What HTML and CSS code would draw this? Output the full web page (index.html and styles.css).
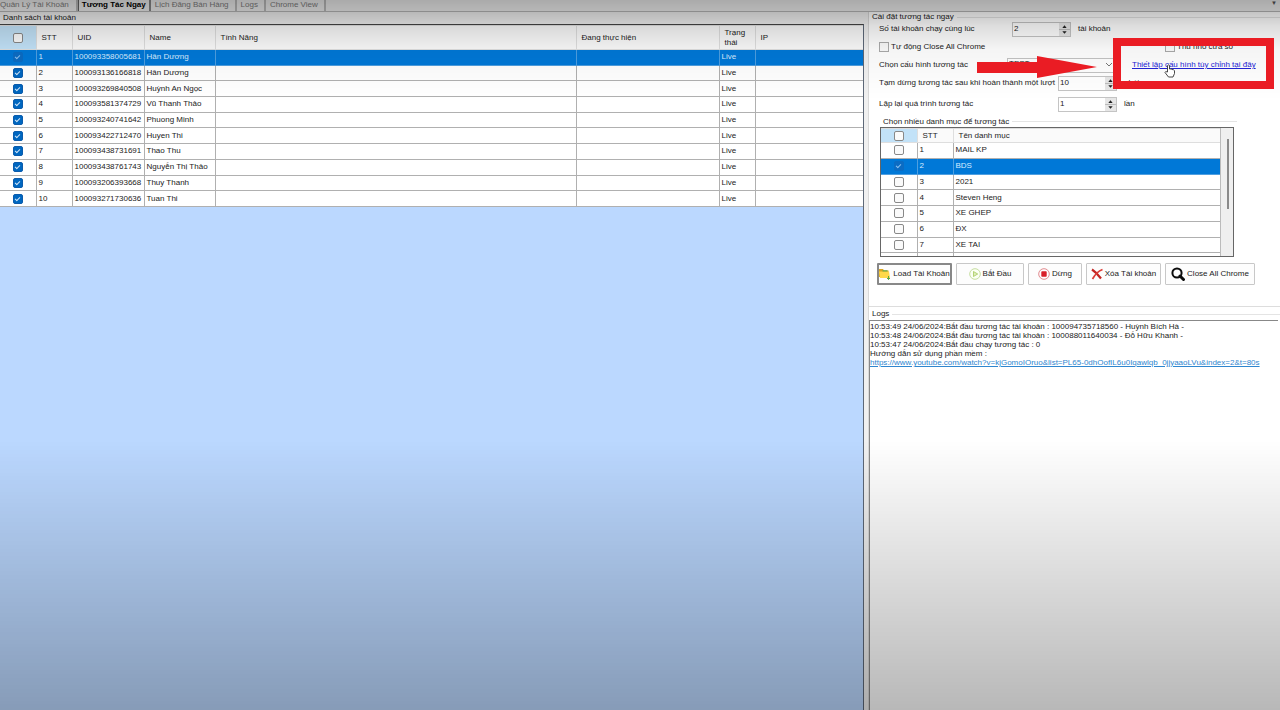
FILE: index.html
```html
<!DOCTYPE html>
<html lang="vi">
<head>
<meta charset="utf-8">
<title>Tương Tác Ngay</title>
<link rel="stylesheet" href="styles.css">
</head>
<body>
<nav class="tabs">
  <button class="tab">Quản Lý Tài Khoản</button>
  <button class="tab active">Tương Tác Ngay</button>
  <button class="tab">Lịch Đăng Bán Hàng</button>
  <button class="tab">Logs</button>
  <button class="tab">Chrome View</button>
  <span class="tabs-menu">▼</span>
</nav>
<main class="work">
  <section class="accounts">
    <h2 class="caption">Danh sách tài khoản</h2>
    <div class="grid-area">
      <table class="grid accounts-grid">
        <colgroup><col class="c36"><col class="c36"><col class="c72"><col class="c71"><col><col class="c143"><col class="c36"><col class="c108"></colgroup>
        <thead><tr><th class="pick"><input type="checkbox" aria-label="Chọn tất cả"></th><th>STT</th><th>UID</th><th>Name</th><th>Tính Năng</th><th>Đang thực hiện</th><th>Trạng thái</th><th>IP</th></tr></thead>
        <tbody>
          <tr class="selected"><td><input type="checkbox" checked aria-label="1"></td><td>1</td><td>100093358005681</td><td>Hân Dương</td><td></td><td></td><td>Live</td><td></td></tr>
          <tr><td><input type="checkbox" checked aria-label="2"></td><td>2</td><td>100093136166818</td><td>Hân Dương</td><td></td><td></td><td>Live</td><td></td></tr>
          <tr><td><input type="checkbox" checked aria-label="3"></td><td>3</td><td>100093269840508</td><td>Huỳnh An Ngọc</td><td></td><td></td><td>Live</td><td></td></tr>
          <tr><td><input type="checkbox" checked aria-label="4"></td><td>4</td><td>100093581374729</td><td>Vũ Thanh Thảo</td><td></td><td></td><td>Live</td><td></td></tr>
          <tr><td><input type="checkbox" checked aria-label="5"></td><td>5</td><td>100093240741642</td><td>Phuong Minh</td><td></td><td></td><td>Live</td><td></td></tr>
          <tr><td><input type="checkbox" checked aria-label="6"></td><td>6</td><td>100093422712470</td><td>Huyen Thi</td><td></td><td></td><td>Live</td><td></td></tr>
          <tr><td><input type="checkbox" checked aria-label="7"></td><td>7</td><td>100093438731691</td><td>Thao Thu</td><td></td><td></td><td>Live</td><td></td></tr>
          <tr><td><input type="checkbox" checked aria-label="8"></td><td>8</td><td>100093438761743</td><td>Nguyễn Thị Thảo</td><td></td><td></td><td>Live</td><td></td></tr>
          <tr><td><input type="checkbox" checked aria-label="9"></td><td>9</td><td>100093206393668</td><td>Thuy Thanh</td><td></td><td></td><td>Live</td><td></td></tr>
          <tr><td><input type="checkbox" checked aria-label="10"></td><td>10</td><td>100093271730636</td><td>Tuan Thi</td><td></td><td></td><td>Live</td><td></td></tr>
        </tbody>
      </table>
    </div>
  </section>

  <section class="side">
    <div class="settings">
      <h2 class="legend">Cài đặt tương tác ngay</h2>
      <div class="form">
        <div class="row">
          <label class="name wide" for="threads">Số tài khoản chạy cùng lúc</label>
          <span class="spin"><input id="threads" type="number" value="2"><svg viewBox="0 0 10 12"><path d="M0 6h10" stroke="#bbb"/><path d="M3 4.500h4L5 2zM3 7.500h4L5 10z"/></svg></span>
          <span class="unit">tài khoản</span>
        </div>
        <div class="row">
          <label class="check"><input type="checkbox">Tự động Close All Chrome</label>
          <label class="check compact"><input type="checkbox">Thu nhỏ cửa sổ</label>
        </div>
        <div class="row">
          <label class="name config" for="config">Chọn cấu hình tương tác</label>
          <span class="combo"><select id="config"><option>TEST</option></select><svg viewBox="0 0 8 6"><path d="M1 1l3 3 3-3" fill="none" stroke="#777"/></svg></span>
          <a class="setup" href="#config">Thiết lập cấu hình tùy chỉnh tại đây</a>
        </div>
        <div class="row">
          <label class="name long" for="pause">Tạm dừng tương tác sau khi hoàn thành một lượt</label>
          <span class="spin"><input id="pause" type="number" value="10"><svg viewBox="0 0 10 12"><path d="M0 6h10" stroke="#bbb"/><path d="M3 4.500h4L5 2zM3 7.500h4L5 10z"/></svg></span>
          <span class="unit">phút</span>
        </div>
        <div class="row tall">
          <label class="name long" for="repeat">Lặp lại quá trình tương tác</label>
          <span class="spin"><input id="repeat" type="number" value="1"><svg viewBox="0 0 10 12"><path d="M0 6h10" stroke="#bbb"/><path d="M3 4.500h4L5 2zM3 7.500h4L5 10z"/></svg></span>
          <span class="unit">lần</span>
        </div>
      </div>
      <div class="category">
        <h3 class="legend">Chọn nhiều danh mục để tương tác</h3>
        <div class="category-box">
          <table class="grid category-grid">
            <colgroup><col class="c36"><col class="c36"><col></colgroup>
            <thead><tr><th class="pick"><input type="checkbox" aria-label="Chọn tất cả danh mục"></th><th>STT</th><th>Tên danh mục</th></tr></thead>
            <tbody>
              <tr><td><input type="checkbox" aria-label="MAIL KP"></td><td>1</td><td>MAIL KP</td></tr>
              <tr class="selected"><td><input type="checkbox" checked aria-label="BDS"></td><td>2</td><td>BDS</td></tr>
              <tr><td><input type="checkbox" aria-label="2021"></td><td>3</td><td>2021</td></tr>
              <tr><td><input type="checkbox" aria-label="Steven Heng"></td><td>4</td><td>Steven Heng</td></tr>
              <tr><td><input type="checkbox" aria-label="XE GHEP"></td><td>5</td><td>XE GHEP</td></tr>
              <tr><td><input type="checkbox" aria-label="ĐX"></td><td>6</td><td>ĐX</td></tr>
              <tr><td><input type="checkbox" aria-label="XE TAI"></td><td>7</td><td>XE TAI</td></tr>
              <tr><td><input type="checkbox" aria-label="8"></td><td></td><td></td></tr>
            </tbody>
          </table>
          <div class="scroll"><div class="thumb"></div></div>
        </div>
      </div>
      <div class="actions">
        <button class="action focus"><svg viewBox="0 0 12 12"><path d="M0 1h4l1 1.500h4.500V9H0z" fill="#d9a520"/><path d="M0 3.500h10l1 6.500H1z" fill="#ffd84a"/><path d="M3.500 2.200h5v1.300h-5z" fill="#6fae4c"/><path d="M9.500 8v3.500M8 10l1.500 1.500L11 10" fill="none" stroke="#5da646"/></svg>Load Tài Khoản</button>
        <button class="action start"><svg viewBox="0 0 12 12"><circle cx="6" cy="6" r="5.300" fill="#fbfff4" stroke="#c6dea0"/><path d="M4.500 3.500v5L8.700 6z" fill="#dcedb8" stroke="#9cc34c" stroke-width=".7"/></svg>Bắt Đầu</button>
        <button class="action stop"><svg viewBox="0 0 12 12"><circle cx="6" cy="6" r="5.300" fill="#fff" stroke="#e08a8e"/><rect x="3.300" y="3.300" width="5.400" height="5.400" rx=".8" fill="#d8202a"/></svg>Dừng</button>
        <button class="action remove"><svg viewBox="0 0 12 12"><path d="M1 1.500c3 2 6 5 9 9" fill="none" stroke="#c32522" stroke-width="2.200"/><path d="M11.500 1.500C7.500 3 4 6.500 1.500 11" fill="none" stroke="#dc3b35" stroke-width="1.700"/></svg>Xóa Tài khoản</button>
        <button class="action close-all"><svg class="lens" viewBox="0 0 14 14"><circle cx="6" cy="6" r="4.600" fill="#fff" stroke="#0c0c0c" stroke-width="2"/><path d="M9 9l3.500 3.500" stroke="#0c0c0c" stroke-width="3" stroke-linecap="round"/></svg>Close All Chrome</button>
      </div>
    </div>
    <div class="logs">
      <h2 class="legend">Logs</h2>
      <div class="log-box">
        <p>10:53:49 24/06/2024:Bắt đầu tương tác tài khoản : 100094735718560 - Huỳnh Bích Hà -</p>
        <p>10:53:48 24/06/2024:Bắt đầu tương tác tài khoản : 100088011640034 - Đỗ Hữu Khanh -</p>
        <p>10:53:47 24/06/2024:Bắt đầu chạy tương tác : 0</p>
        <p>Hướng dẫn sử dụng phần mềm :</p>
        <p><a href="#guide">https://www.youtube.com/watch?v=kjGomoIOruo&amp;list=PL65-0dhOofIL6u0Iqawlqb_0jjyaaoLVu&amp;index=2&amp;t=80s</a></p>
      </div>
    </div>
    <div class="callout"></div>
    <svg class="arrow" viewBox="0 0 120 24"><path d="M0 6h60V0l60 11-60 11v-5H0z" fill="#ea1c24"/></svg>
    <svg class="hand" viewBox="0 0 12 14"><path d="M3.500 8V1.500q1-1.200 2 0V5q2-.5 2.500.5 1.800-.3 2.500 1.300v2.700L9 13H4.500L1 8.500q0-1.500 2.500-.5z" fill="#fff" stroke="#333" stroke-width=".9"/></svg>
  </section>
</main>
</body>
</html>
```

FILE: styles.css
```css
* { box-sizing: border-box; }

body {
  margin: 0;
  min-height: 100vh;
  display: flex;
  flex-direction: column;
  font: 8px/10px "Liberation Sans", Arial, sans-serif;
  color: #222;
  background: #f0f0f0;
}

/* soft shade along the top and bottom of the window */
body::after {
  content: "";
  position: fixed;
  inset: 0;
  pointer-events: none;
  background:
    linear-gradient(rgba(0,0,0,.29), rgba(0,0,0,.23) 12px, rgba(0,0,0,.13) 26px, rgba(0,0,0,.04) 50px, transparent 100px),
    linear-gradient(transparent 62%, rgba(0,0,0,.28));
}

h2, h3, p { margin: 0; font-size: 8px; font-weight: 400; }
button, input, select { font: inherit; color: inherit; }
svg { flex: none; }

.tabs {
  display: flex;
  height: 12px;
  border-bottom: 1px solid #b8b8b8;
}
.tab {
  height: 11px;
  padding: 0 6px 2px 4px;
  border: 0;
  border-right: 2px solid #bbb;
  background: none;
  color: #7d7d7d;
  line-height: 8px;
  white-space: nowrap;
}
.tab:first-child { padding: 0 7px 2px 0; }
.tab.active {
  padding: 0 3px 2px;
  color: #000;
  font-weight: 700;
  border-left: 1px solid #666;
  border-right-color: #888;
}
.tabs-menu { margin-left: auto; padding-right: 3px; font-size: 6px; line-height: 6px; color: #555; }

.work {
  flex: 1;
  display: grid;
  grid-template-columns: minmax(0, 1fr) 412px;
  gap: 4px;
}

.accounts { display: flex; flex-direction: column; }
.caption { height: 12px; padding-left: 3px; line-height: 12px; }
.grid-area {
  flex: 1;
  background: #bbd8ff;
  border-top: 1px solid #444;
  border-right: 1px solid #5d6878;
}

.grid { width: 100%; border-collapse: collapse; table-layout: fixed; background: #fff; }
.grid th, .grid td {
  padding: 0 2px;
  border: 1px solid #b0b0b0;
  text-align: left;
  font-weight: 400;
  white-space: nowrap;
}
.grid th {
  padding-left: 5px;
  border-color: #dedede;
  background: #fafafa;
  white-space: normal;
}
.grid th.pick { background: #c2e2f8; }
.grid th:first-child, .grid td:first-child { padding: 0; text-align: center; }
.grid .selected td { background: #0078d7; color: #d8ecff; border-color: #4f9fe0; }
.grid tr > :first-child { border-left: 0; }
.grid tr > :last-child { border-right: 0; }
.accounts-grid { height: 182px; }
.accounts-grid thead tr { height: 24px; }
.category-grid { height: 141px; }
.c36 { width: 36px; }
.c71 { width: 71px; }
.c72 { width: 72px; }
.c108 { width: 108px; }
.c143 { width: 143px; }

input[type="checkbox"] {
  appearance: none;
  display: block;
  flex: none;
  width: 10px;
  height: 10px;
  margin: 0 auto;
  border: 1px solid #888;
  border-radius: 2px;
  background: #fafafa;
}
input[type="checkbox"]:checked { border-color: #0b5cad; background: #0067c0; }
input[type="checkbox"]:checked::after {
  content: "";
  display: block;
  width: 4px;
  height: 2px;
  margin: 2px auto;
  border: solid #cfe4f8;
  border-width: 0 0 1px 1px;
  transform: rotate(-45deg);
}
.selected input[type="checkbox"]:checked { border-color: #0b6cc4; background: #0b6cc4; }
.selected input[type="checkbox"]:checked::after { border-color: #8ac0f0; }

.side {
  position: relative;
  display: flex;
  flex-direction: column;
  background: #fff;
  border-left: 1px solid #d8d8d8;
}
.legend { display: flex; align-items: center; gap: 3px; line-height: 10px; padding-left: 3px; }
.legend::after { content: ""; flex: 1; height: 1px; background: #e4e4e4; }
.settings { height: 295px; border-bottom: 1px solid #ddd; }
.settings > .legend { height: 10px; margin-bottom: -2px; }
.form { display: flex; flex-direction: column; padding-left: 10px; }

.row { display: flex; align-items: center; height: 18px; white-space: nowrap; }
.row.tall { height: 24px; }
.name.wide { width: 133px; }
.name.config { width: 128px; }
.name.long { width: 179px; }
.spin { display: flex; align-items: center; width: 59px; height: 15px; border: 1px solid #c4c4c4; background: #fff; }
.spin input { flex: 1; min-width: 0; height: 13px; padding: 0 1px 2px; border: 0; background: none; appearance: textfield; }
.spin input::-webkit-inner-spin-button { display: none; }
.spin svg { width: 11px; height: 13px; background: #e6e6e6; fill: #222; }
.unit { padding-left: 7px; }
.check { display: flex; align-items: center; gap: 2px; width: 286px; }
.check.compact { width: auto; }
.check input[type="checkbox"] { margin: 0; border-color: #aaa; border-radius: 0; }
.combo { display: flex; align-items: center; width: 109px; height: 15px; border: 1px solid #c4c4c4; background: #fff; }
.combo select { flex: 1; min-width: 0; height: 13px; padding: 0 0 4px 1px; border: 0; background: none; appearance: none; }
.combo svg { width: 8px; height: 6px; margin-right: 2px; }
.setup { padding-left: 16px; color: #2424d8; }

.category { width: 360px; margin-left: 8px; }
.category > .legend { height: 11px; padding-left: 6px; }
.category-box {
  display: flex;
  width: 354px;
  height: 130px;
  margin-left: 3px;
  overflow: hidden;
  border: 1px solid #666;
}
.category-grid { flex: 1; }
.category-grid thead tr { height: 14px; }
.scroll { width: 13px; padding: 11px 0 0 6px; border-left: 1px solid #bbb; background: #efefef; }
.thumb { width: 2px; height: 70px; background: #8a8a8a; }

.actions { display: flex; gap: 4px; padding: 6px 0 0 8px; }
.action {
  display: flex;
  align-items: center;
  justify-content: center;
  gap: 2px;
  width: 75px;
  height: 22px;
  padding: 0;
  border: 1px solid #c8c8c8;
  border-radius: 1px;
  background: #fdfdfd;
  white-space: nowrap;
}
.action svg { width: 12px; height: 12px; }
.action .lens { width: 14px; height: 14px; }
.action.focus { border: 2px solid #888; }
.action.start { width: 68px; }
.action.stop { width: 54px; }
.action.close-all { width: 90px; }

.logs { flex: 1; display: flex; flex-direction: column; padding-top: 1px; }
.logs > .legend { height: 12px; }
.log-box {
  flex: 1;
  margin-right: 2px;
  padding-top: 1px;
  border: solid #888;
  border-width: 1px 0 0 1px;
  line-height: 9px;
  white-space: nowrap;
}
.log-box a { color: #2f86cf; }

/* annotation laid over the form */
.callout, .arrow, .hand { position: absolute; z-index: 2; pointer-events: none; }
.callout { left: 244px; top: 26px; width: 161px; height: 51px; border: 8px solid #ea1c24; }
.arrow { left: 108px; top: 44px; width: 120px; height: 24px; }
.hand { left: 295px; top: 52px; width: 12px; height: 14px; }
```
